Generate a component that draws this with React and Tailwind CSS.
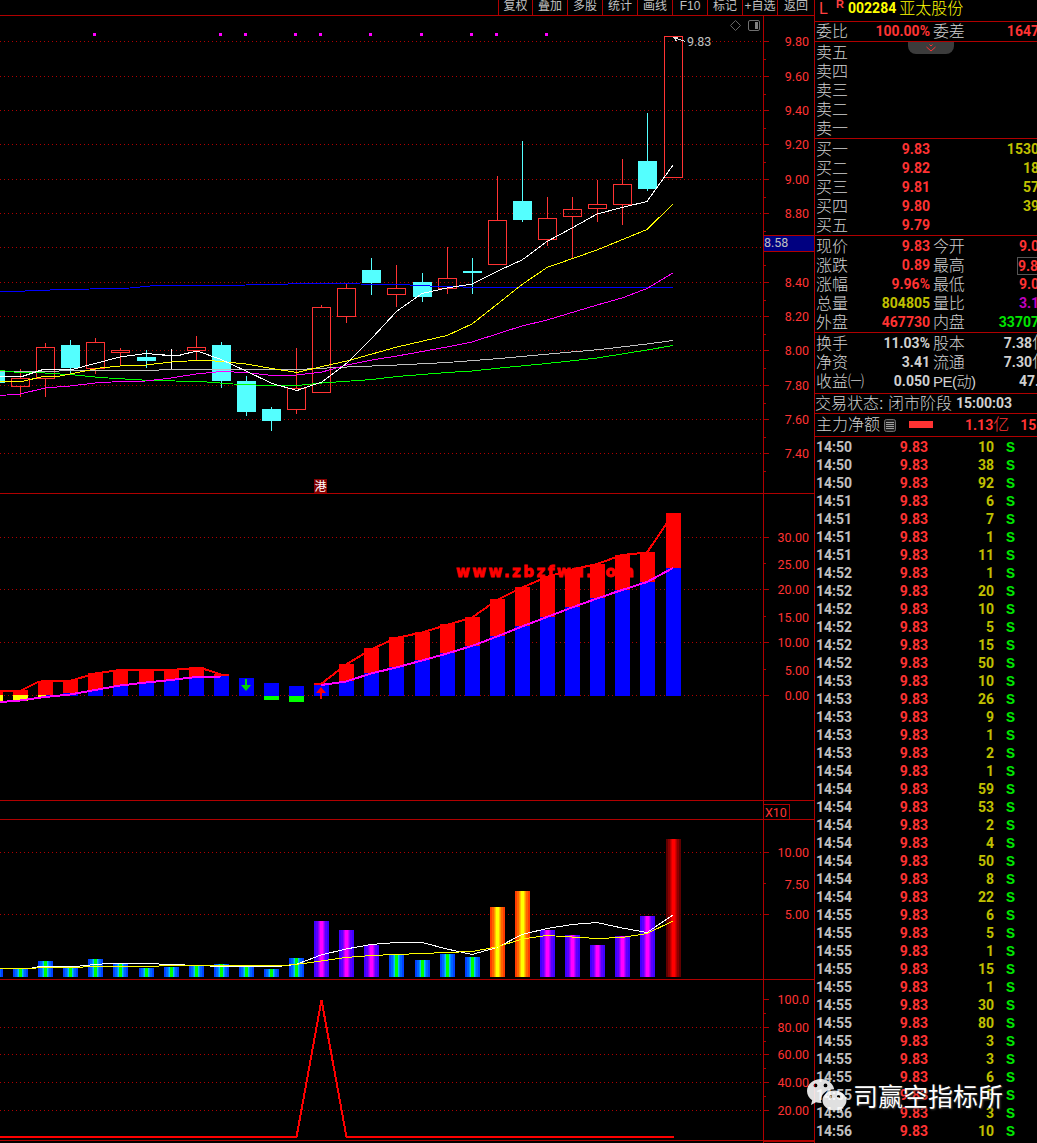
import clsx from "clsx";

const LINE = "#b00000";
const UP = "#ff3333";
const DOWN = "#54ffff";

const TOOLS = ["复权", "叠加", "多股", "统计", "画线", "F10", "标记", "+自选", "返回"];

// [left, bodyTop, bodyBottom, high, low, kind]
const CANDLES = [
  [-14, 371, 383, 371, 383, "down"],
  [11, 378, 387, 369, 397, "up"],
  [36, 347, 379, 343, 397, "up"],
  [61, 345, 368, 340, 373, "down"],
  [86, 342, 369, 338, 374, "up"],
  [111, 350, 353, 348, 366, "up"],
  [137, 357, 361, 350, 368, "down"],
  [162, 355, 356, 349, 370, "flat"],
  [187, 347, 351, 336, 360, "up"],
  [212, 345, 381, 342, 388, "down"],
  [237, 381, 412, 376, 416, "down"],
  [262, 409, 421, 407, 431, "down"],
  [287, 388, 410, 348, 414, "up"],
  [312, 307, 393, 305, 393, "up"],
  [337, 288, 317, 284, 323, "up"],
  [362, 270, 283, 258, 295, "down"],
  [387, 288, 295, 265, 307, "up"],
  [413, 282, 297, 273, 302, "down"],
  [438, 278, 289, 247, 294, "up"],
  [463, 271, 273, 258, 294, "down"],
  [488, 220, 265, 176, 265, "up"],
  [513, 201, 220, 141, 222, "down"],
  [538, 218, 240, 197, 246, "up"],
  [563, 209, 217, 197, 258, "up"],
  [588, 204, 209, 180, 222, "up"],
  [613, 184, 205, 159, 225, "up"],
  [638, 161, 189, 113, 191, "down"],
  [664, 36, 178, 36, 178, "up"],
];

const PRICE_LINES = [
  ["#0000ff", "0,292 50,290 130,288 150,286 246,285 310,283.5 360,284 410,285 430,286 480,287.5 673,287.5"],
  ["#c0c0c0", "0,371.5 58,371.5 60,370.5 158,370.5 160,369.5 297,369.5 347,367 397,365 447,362.5 500,358.5 560,353 600,349.5 647,344 673,340.5"],
  ["#00ff00", "0,370.5 14,372 45,373 75,375 100,377.5 125,379 150,380.5 200,381.5 240,384.5 272,385.5 297,385.5 322,383 372,379.5 397,376.5 447,372.5 472,371 500,368 547,363.5 597,358 647,350 673,345.5"],
  ["#ff00ff", "0,395.5 20,394 45,388 70,386 95,383 120,381.5 146,381 171,378 196,374 221,371.5 246,372.5 272,375.5 297,375 322,372 347,365 372,360 397,356 447,347 472,342 500,333 522,326 547,320 572,312.5 597,305 622,298 647,288.5 673,273"],
  ["#ffff00", "0,381.5 22,381.5 43,376.5 60,376 75,373 100,368 120,366 146,365 171,362 196,360.5 208,360.5 221,361.5 246,364 272,368.5 297,372.5 322,366.5 347,361 397,347 447,335.5 472,324 500,302 522,284.5 547,267.5 597,250 647,229.5 673,204"],
  ["#ffffff", "0,376.5 22,376.5 43,369.5 72,369.5 95,363.5 120,357 146,353.5 171,355.5 180,355 197,351 220,359 246,371 272,383.5 297,390.5 322,382 347,363 372,338 397,311 422,293.5 447,288 472,284 500,270 522,260 547,241.5 572,228 597,214 622,207.5 647,201.5 673,165"],
];

// [left, redTop, blueTop]
const TREND_BARS = [
  [38, 681, 695], [63, 680, 693], [88, 673, 690], [113, 670, 686], [139, 669, 683],
  [164, 669, 680], [189, 667, 678], [214, 674, 676], [239, 678, 678], [264, 683, 683],
  [289, 686, 686], [314, 683, 685], [339, 664, 681], [364, 648, 673], [389, 637, 667],
  [415, 632, 660], [440, 624, 653], [465, 617, 646], [490, 599, 636], [515, 587, 626],
  [540, 576, 617], [565, 569, 607], [590, 564, 598], [615, 555, 590], [640, 552, 582],
  [666, 513, 568],
];

// [left, top, gradient]
const VOLUMES = [
  [-12, 969, "cool"], [13, 969, "cool"], [38, 961, "cool"], [63, 967, "cool"], [88, 959, "cool"],
  [113, 964, "cool"], [139, 968, "cool"], [164, 967, "cool"], [189, 965, "cool"], [214, 964, "cool"],
  [239, 966, "cool"], [264, 969, "cool"], [289, 958, "cool"], [314, 921, "violet"], [339, 930, "violet"],
  [364, 945, "violet"], [389, 955, "cool"], [415, 960, "cool"], [440, 954, "cool"], [465, 957, "cool"],
  [490, 907, "fire"], [515, 891, "fire"], [540, 930, "violet"], [565, 935, "violet"], [590, 945, "violet"],
  [615, 936, "violet"], [640, 916, "violet"], [666, 839, "blood"],
];

const GRADIENTS = {
  cool: ["#0040ff", "#0064ff", "#0090ff", "#00c8ff", "#00ff00"],
  violet: ["#4000ff", "#5a00ff", "#8c00ff", "#c800ff", "#ff00ff"],
  fire: ["#ff3c00", "#ff6400", "#ff9600", "#ffc800", "#ffff00"],
  blood: ["#600000", "#8c0000", "#b40000", "#dc0000", "#ff0000"],
};

const DOTS = [93, 219, 244, 294, 319, 369, 420, 470, 495, 545];

const SELLS = ["卖五", "卖四", "卖三", "卖二", "卖一"];

const BUYS = [
  ["买一", "9.83", "1530"],
  ["买二", "9.82", "18"],
  ["买三", "9.81", "57"],
  ["买四", "9.80", "39"],
  ["买五", "9.79", ""],
];

const red = "text-[#ff3333]";
const yellow = "text-[#c0c000]";

const SUMMARY = [
  ["现价", "9.83", red, "今开", "9.0", red],
  ["涨跌", "0.89", red, "最高", "9.8", red],
  ["涨幅", "9.96%", red, "最低", "9.0", red],
  ["总量", "804805", yellow, "量比", "3.1", "text-[#c000c0]"],
  ["外盘", "467730", red, "内盘", "33707", "text-[#00e600]"],
];

const TICKS = [
  ["14:50", 10], ["14:50", 38], ["14:50", 92], ["14:51", 6], ["14:51", 7], ["14:51", 1],
  ["14:51", 11], ["14:52", 1], ["14:52", 20], ["14:52", 10], ["14:52", 5], ["14:52", 15],
  ["14:52", 50], ["14:53", 10], ["14:53", 26], ["14:53", 9], ["14:53", 1], ["14:53", 2],
  ["14:54", 1], ["14:54", 59], ["14:54", 53], ["14:54", 2], ["14:54", 4], ["14:54", 50],
  ["14:54", 8], ["14:54", 22], ["14:55", 6], ["14:55", 5], ["14:55", 1], ["14:55", 15],
  ["14:55", 1], ["14:55", 30], ["14:55", 80], ["14:55", 3], ["14:55", 3], ["14:55", 6],
  ["14:55", 5], ["14:56", 3], ["14:56", 10],
];

function Line({ points, color, width = 1 }) {
  return (
    <polyline points={points} fill="none" stroke={color} strokeWidth={width} shapeRendering="crispEdges" />
  );
}

// grid rows, the axis on the right and its tick marks and labels
function Scale({ top, bottom, grid, major = grid, minor, labels }) {
  return (
    <g shapeRendering="crispEdges">
      {grid.map((y) => (
        <line key={y} x1="0" x2="763" y1={y + 0.5} y2={y + 0.5} stroke={LINE} strokeDasharray="1 3" />
      ))}
      <rect x="763" y={top} width="1" height={bottom - top} fill={LINE} />
      {major.map((y) => (
        <rect key={y} x="764" y={y} width="5" height="1" fill={LINE} />
      ))}
      {minor.map((y) => (
        <rect key={y} x="764" y={y} width="2" height="1" fill={LINE} />
      ))}
      {labels.map(([text, y]) => (
        <text key={text} x="809" y={y + 5} textAnchor="end" fontSize="12.5" fill={UP}>
          {text}
        </text>
      ))}
    </g>
  );
}

function Panel({ top, height, className, children }) {
  return (
    <svg
      className={clsx("block w-[814px] shrink-0 font-['Roboto','Noto_Sans_CJK_SC',sans-serif]", className)}
      width="814"
      height={height}
      viewBox={`0 ${top} 814 ${height}`}
    >
      {children}
    </svg>
  );
}

function Candle({ data }) {
  const [x, top, bottom, high, low, kind] = data;
  const color = kind === "up" ? UP : kind === "down" ? DOWN : "#ffffff";
  return (
    <g shapeRendering="crispEdges" fill={color}>
      <rect x={x + 9} y={high} width="1" height={top - high} />
      <rect x={x + 9} y={bottom} width="1" height={low - bottom} />
      {kind === "up" ? (
        <rect x={x + 0.5} y={top + 0.5} width="18" height={bottom - top - 1} fill="none" stroke={color} />
      ) : (
        <rect x={x} y={top} width="19" height={bottom - top} />
      )}
    </g>
  );
}

function PriceChart() {
  const rows = [41, 76, 110, 144, 179, 213, 247, 282, 316, 350, 385, 419, 453];
  const names = ["9.80", "9.60", "9.40", "9.20", "9.00", "8.80", null, "8.40", "8.20", "8.00", "7.80", "7.60", "7.40"];
  return (
    <Panel top={16} height={477}>
      <Scale
        top={16}
        bottom={493}
        grid={rows}
        minor={rows.map((y) => y + 18)}
        labels={rows.map((y, i) => [names[i], y]).filter(([name]) => name)}
      />
      {CANDLES.map((c) => (
        <Candle key={c[0]} data={c} />
      ))}
      {PRICE_LINES.map(([color, points]) => (
        <Line key={color} color={color} points={points} />
      ))}
      {DOTS.map((x) => (
        <rect key={x} x={x} y="33" width="3" height="3" fill="#ff00ff" />
      ))}

      <path d="M685.5 41.5L673.5 37.5M673.5 37.5h4M673.5 37.5l3 3.500" stroke="#e0e0e0" fill="none" shapeRendering="crispEdges" />
      <text x="687" y="46" fontSize="12.5" fill="#c0c0c0">9.83</text>

      <path d="M735.5 20.5l5 5-5 5-5-5z" fill="none" stroke="#666666" />
      <rect x="748.5" y="20.5" width="11" height="10" rx="1.5" fill="none" stroke="#707070" />
      <rect x="755" y="22" width="3" height="7" fill="#808080" />

      <rect x="764" y="235" width="50" height="17" fill={LINE} />
      <rect x="764" y="236" width="50" height="15" fill="#000080" />
      <text x="764" y="247" fontSize="12.5" fill="#c0c0c0">8.58</text>

      <rect x="314" y="479" width="13" height="14" fill="#800000" />
      <text x="314.5" y="490.5" fontSize="12" fill="#ffffff">港</text>
    </Panel>
  );
}

function TrendChart() {
  return (
    <Panel top={494} height={306}>
      <Scale
        top={494}
        bottom={800}
        grid={[537, 589, 642, 695]}
        minor={[563, 616, 669]}
        labels={[["30.00", 537], ["25.00", 564], ["20.00", 589], ["15.00", 617], ["10.00", 642], ["5.00", 670], ["0.00", 695]]}
      />
      <text
        x="456"
        y="577"
        fontSize="15"
        fontWeight="700"
        fontFamily="'DejaVu Sans', sans-serif"
        textLength="178"
        lengthAdjust="spacing"
        fill="#ff0000"
        stroke="#ff0000"
        strokeWidth="0.8"
      >
        www.zbzfwu.com
      </text>
      <g shapeRendering="crispEdges">
        <rect x="0" y="690" width="3" height="5" fill="#ff0000" />
        <rect x="0" y="695" width="3" height="6" fill="#ffff00" />
        <rect x="13" y="690" width="15" height="5" fill="#ff0000" />
        <rect x="13" y="695" width="15" height="6" fill="#ffff00" />
        {TREND_BARS.map(([x, top, mid]) => (
          <g key={x}>
            <rect x={x} y={top} width="15" height={mid - top} fill="#ff0000" />
            <rect x={x} y={mid} width="15" height={696 - mid} fill="#0000ff" />
          </g>
        ))}
        <rect x="38" y="695" width="8" height="2" fill="#ffff00" />
        <rect x="264" y="696" width="15" height="4" fill="#00ff00" />
        <rect x="289" y="696" width="15" height="6" fill="#00ff00" />
      </g>
      <Line width={2} color="#ff0000" points="0,691 20,691 38,682 45,681 70,681 95,673.5 120,670 146,670 171,670 196,668 204,669 221,674.5 229,675" />
      <Line width={2} color="#ff0000" points="314,684 321,684 346,664.5 371,649.5 396,638 422,632.5 447,625 472,617.5 497,600 522,587.5 547,577 572,569.5 597,564 622,555 647,552.5 673,514" />
      <Line width={2} color="#ff00ff" points="0,702 20,700.5 45,697 70,694.5 95,690 120,685.5 146,682.5 171,680 196,677 221,676.5" />
      <Line width={2} color="#ff00ff" points="321,685 346,681.5 371,673.5 396,667.5 422,660.5 447,653.5 472,646 497,636.5 522,626.5 547,617 572,607.5 597,598.5 622,590 647,582 673,568" />
      <path d="M245 679h2v6h4l-5 6-5-6h4z" fill="#00d800" />
      <path d="M320 699h2v-6h4l-5-6-5 6h4z" fill="#ff0000" />
    </Panel>
  );
}

function VolumeChart() {
  return (
    <Panel top={820} height={159}>
      <defs>
        {Object.entries(GRADIENTS).map(([id, [a, b, c, d, e]]) => (
          <linearGradient key={id} id={id}>
            {[a, b, c, d, e, d, c, b, a].map((color, i) => {
              const edges = [0, 2, 4, 5, 6, 9, 10, 11, 13, 15];
              return [
                <stop key={`${i}a`} offset={edges[i] / 15} stopColor={color} />,
                <stop key={`${i}b`} offset={edges[i + 1] / 15} stopColor={color} />,
              ];
            })}
          </linearGradient>
        ))}
      </defs>
      <Scale
        top={820}
        bottom={979}
        grid={[852, 914]}
        minor={[883]}
        labels={[["10.00", 852], ["7.50", 884], ["5.00", 914]]}
      />
      {VOLUMES.map(([x, top, tone]) => (
        <rect key={x} x={x} y={top} width="15" height={977 - top} fill={`url(#${tone})`} />
      ))}
      <Line color="#ffffff" points="0,968.5 30,968.5 40,966.5 75,966.5 95,964.5 110,963.5 152,963.5 165,964.5 205,965.5 215,966.5 278,966.5 296,964.5 321,955 346,949 371,944.5 396,942.5 422,942.5 447,949 472,954.5 497,947.5 522,934.5 547,928.5 572,924.5 597,922.5 622,928 647,932.5 673,915" />
      <Line color="#ffff00" points="0,968.5 33,968.5 40,967.5 82,967.5 84,966.5 158,966.5 160,965.5 283,965.5 296,964.5 321,961 346,957.5 371,955.5 396,954.5 422,953.5 447,952.5 472,951.5 497,947 522,939 547,935.5 572,937 597,938.5 622,937.5 647,933.5 673,921" />
    </Panel>
  );
}

function SignalChart() {
  return (
    <Panel top={980} height={163}>
      <Scale
        top={980}
        bottom={1143}
        grid={[1027, 1054, 1082, 1110]}
        major={[999, 1027, 1054, 1082, 1110]}
        minor={[1013, 1041, 1068, 1096]}
        labels={[["100.0", 999], ["80.00", 1027], ["60.00", 1054], ["40.00", 1082], ["20.00", 1110]]}
      />
      <Line width={2} color="#ff0000" points="0,1137 296.5,1137 321.5,1000 346.5,1137 674,1137" />
      <rect x="0" y="1140" width="814" height="1" fill={LINE} />
      <rect x="763" y="1141" width="51" height="1" fill={LINE} />
    </Panel>
  );
}

function Toolbar() {
  return (
    <div className="flex h-4 justify-end overflow-hidden border-b border-[#b00000]">
      {TOOLS.map((name, i) => (
        <div
          key={name}
          className={clsx(
            "flex h-[15px] items-start justify-center border-l border-[#b00000] text-[12px] leading-[12px] whitespace-nowrap text-[#c0c0c0]",
            i === 0 ? "w-[34px]" : i === TOOLS.length - 1 ? "w-[37px]" : "w-[35px]"
          )}
        >
          {name}
        </div>
      ))}
    </div>
  );
}

function Section({ className, children }) {
  return <div className={clsx("shrink-0 border-b border-[#b00000]", className)}>{children}</div>;
}

function Num({ className, children }) {
  return (
    <span className={clsx("font-['Roboto','Noto_Sans_CJK_SC',sans-serif] text-[14px] font-bold", className)}>
      {children}
    </span>
  );
}

function Row({ label, value, tone, label2, value2, tone2, boxed, wide }) {
  return (
    <div className="flex h-[19px] items-center leading-[19px] whitespace-nowrap">
      <div className="flex w-[115px] shrink-0 justify-between pl-px">
        <span>{label}</span>
        <Num className={tone}>{value}</Num>
      </div>
      <span className="ml-[3px] grow tracking-[-0.2px]">{label2}</span>
      <Num
        className={clsx(
          tone2,
          wide ? "-mr-[11px]" : "-mr-[2px]",
          boxed && "h-[18px] border border-[#555555] leading-[16px]"
        )}
      >
        {value2}
      </Num>
    </div>
  );
}

function Yi() {
  return <span className="text-[16px] leading-[16px] font-light">亿</span>;
}

function QuotePanel() {
  return (
    <div className="flex h-[1143px] w-[222px] shrink-0 flex-col overflow-hidden text-[16px] font-light text-[#d0d0d0]">
      <Section className="flex h-[22px] items-start pl-1 leading-[17px]">
        <span className="w-[17px] text-[16px] leading-[18px] font-normal text-[#ff4040]">L</span>
        <span className="w-3 text-[11px] leading-[9px] font-bold text-[#ff4040]">R</span>
        <Num className="text-[#ffff00]">002284</Num>
        <span className="ml-[3px] text-[#ffff00]">亚太股份</span>
      </Section>

      <Section className="h-5">
        <Row label="委比" value="100.00%" tone={red} label2="委差" value2="1647" tone2={red} />
      </Section>

      <Section className="relative h-[97px] pt-px">
        {SELLS.map((name) => (
          <Row key={name} label={name} />
        ))}
        <div className="absolute top-0 left-[93px] flex h-3 w-[46px] justify-center rounded-b-lg bg-[#3c3c3c]">
          <svg className="shrink-0" width="11" height="12" viewBox="0 0 11 12" fill="none" stroke="#ff3333">
            <path d="M3.5 2.5l1.500 1.500 1.500-1.500M.5 5l4.500 4L9.500 5" />
          </svg>
        </div>
      </Section>

      <Section className="h-[97px] pt-px">
        {BUYS.map(([name, price, amount]) => (
          <Row key={name} label={name} value={price} tone={red} value2={amount} tone2={yellow} />
        ))}
      </Section>

      <Section className="h-[97px] pt-px">
        {SUMMARY.map(([label, value, tone, label2, value2, tone2]) => (
          <Row
            key={label}
            label={label}
            value={value}
            tone={tone}
            label2={label2}
            value2={value2}
            tone2={tone2}
            boxed={label2 === "最高"}
          />
        ))}
      </Section>

      <Section className="h-[61px] pt-px">
        <Row label="换手" value="11.03%" label2="股本" value2={<>7.38<Yi /></>} wide />
        <Row label="净资" value="3.41" label2="流通" value2={<>7.30<Yi /></>} wide />
        <Row label="收益㈠" value="0.050" label2={<span className="text-[15px] tracking-[-0.5px]">PE(动)</span>} value2="47." />
      </Section>

      <Section className="flex h-5 items-center leading-[19px] whitespace-nowrap">
        <span className="w-[73px] shrink-0">交易状态:</span>
        <span>闭市阶段</span>
        <Num className="ml-1">15:00:03</Num>
      </Section>

      <Section className="flex h-[23px] items-center whitespace-nowrap">
        <span className="pl-px">主力净额</span>
        <svg className="ml-1 shrink-0" width="12" height="13" viewBox="0 0 12 13">
          <rect x="0.5" y="0.5" width="11" height="12" rx="2" fill="#222222" stroke="#707070" />
          <path d="M2 3.5h8M2 5.5h8M2 7.5h8M2 9.5h8" stroke="#a0a0a0" shapeRendering="crispEdges" />
        </svg>
        <div className="mb-[2px] ml-[13px] h-[7px] w-6 shrink-0 bg-[#ff3333]" />
        <Num className="ml-8 text-[#ff3333]">1.13</Num>
        <span className="text-[#ff3333]">亿</span>
        <Num className="ml-[11px] text-[#ff3333]">155</Num>
      </Section>

      <div className="pt-px">
        {TICKS.map(([time, amount], i) => (
          <div
            key={i}
            className="flex h-[18px] items-center font-['Roboto',sans-serif] text-[14px] leading-[18px] font-bold text-[#c0c0c0]"
          >
            <span className="w-[60px] pl-px">{time}</span>
            <span className="w-[53px] text-right text-[#ff3333]">9.83</span>
            <span className="w-[66px] text-right text-[#c0c000]">{amount}</span>
            <span className="mt-[3px] ml-3 font-['Liberation_Mono',monospace] text-[15px] text-[#00e600]">S</span>
          </div>
        ))}
      </div>
    </div>
  );
}

function Watermark() {
  return (
    <div className="absolute top-[1077px] left-[806px] flex items-start">
      <svg width="42" height="38" viewBox="0 0 42 38">
        <path
          fillRule="evenodd"
          fill="#ffffff"
          fillOpacity="0.88"
          d="M15 2C7.200 2 1 7.400 1 14c0 3.800 2 7.100 5.200 9.300L5 28l5-2.800c1.600.5 3.300.8 5 .8h.6A11 11 0 0 1 15 23c0-6 5.800-10.800 13.200-10.800C27.200 6.400 21.700 2 15 2zM9.500 6.500a1.900 1.900 0 1 1 0 3.800 1.900 1.900 0 0 1 0-3.800zm10 0a1.900 1.900 0 1 1 0 3.800 1.900 1.900 0 0 1 0-3.800z"
        />
        <path
          fillRule="evenodd"
          fill="#ffffff"
          fillOpacity="0.88"
          d="M28.500 13.500C21.800 13.500 16.500 18 16.500 23.500s5.300 10 12 10c1.300 0 2.600-.2 3.800-.5l4.400 1.800-1.100-3.200c3-1.900 4.900-4.800 4.900-8.100 0-5.500-5.300-10-12-10zM24.500 18a1.600 1.600 0 1 1 0 3.200 1.600 1.600 0 0 1 0-3.200zm8 0a1.600 1.600 0 1 1 0 3.200 1.600 1.600 0 0 1 0-3.200z"
        />
      </svg>
      <span className="ml-[5px] pt-px text-[25px] leading-[38px] whitespace-nowrap text-white [text-shadow:1px_1px_2px_#444]">
        司赢空指标所
      </span>
    </div>
  );
}

export default function App() {
  return (
    <div className="relative flex h-[1143px] w-[1037px] overflow-hidden bg-black font-['Liberation_Sans','Noto_Sans_CJK_SC',sans-serif]">
      <div className="flex w-[815px] shrink-0 flex-col border-r border-[#b00000]">
        <Toolbar />
        <PriceChart />
        <div className="h-px bg-[#b00000]" />
        <TrendChart />
        <div className="flex h-5 justify-end border-y border-[#b00000]">
          <div className="w-[51px] border-l border-[#b00000] pt-[3px]">
            <div className="h-[15px] w-[26px] border-t border-r border-[#b00000] pl-px font-['Roboto',sans-serif] text-[12.5px] leading-[15px] text-[#ff3333]">
              X10
            </div>
          </div>
        </div>
        <VolumeChart />
        <div className="h-px bg-[#b00000]" />
        <SignalChart />
      </div>
      <QuotePanel />
      <Watermark />
    </div>
  );
}
